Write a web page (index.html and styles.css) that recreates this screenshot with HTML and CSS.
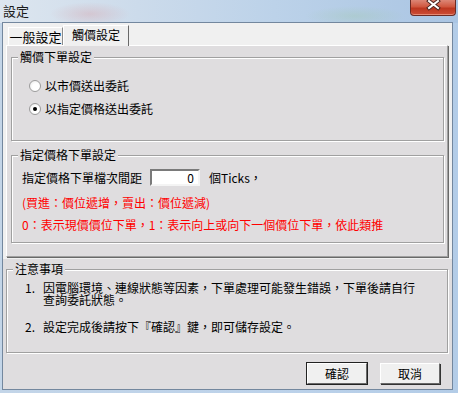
FILE: index.html
```html
<!DOCTYPE html>
<html lang="zh-Hant">
<head>
    <meta charset="UTF-8">
    <meta name="viewport" content="width=device-width, initial-scale=1.0">
    <title>設定</title>
    <link rel="stylesheet" href="styles.css">
</head>
<body>
    <div class="window">
        <div class="titlebar">
            <span class="title">設定</span>
            <div class="close-btn">
                <svg width="44" height="15" viewBox="0 0 44 15">
                    <path d="M18 1 L27 8 M27 1 L18 8" stroke="#4a2420" stroke-width="4" stroke-linecap="square" fill="none"/>
                    <path d="M18 1 L27 8 M27 1 L18 8" stroke="#ffffff" stroke-width="2" stroke-linecap="square" fill="none"/>
                </svg>
            </div>
        </div>
        <div class="client">
            <div class="tab-control">
                <div class="tab-strip">
                    <div class="tab">一般設定</div>
                    <div class="tab active">觸價設定</div>
                </div>
                <div class="tab-page">
                    <fieldset class="group">
                        <legend>觸價下單設定</legend>
                        <div class="group-body radios">
                            <label class="radio-row"><span class="radio"></span>以市價送出委託</label>
                            <label class="radio-row"><span class="radio checked"></span>以指定價格送出委託</label>
                        </div>
                    </fieldset>
                    <fieldset class="group price-group">
                        <legend>指定價格下單設定</legend>
                        <div class="group-body price">
                            <div class="tick-row">
                                <span>指定價格下單檔次間距</span>
                                <input type="text" class="tick-input" value="0">
                                <span class="unit">個Ticks，</span>
                            </div>
                            <p class="hint">(買進：價位遞增，賣出：價位遞減)</p>
                            <p class="hint">0：表示現價價位下單，1：表示向上或向下一個價位下單，依此類推</p>
                        </div>
                    </fieldset>
                </div>
            </div>
            <fieldset class="group notes">
                <legend>注意事項</legend>
                <div class="group-body notes-body">
                    <div class="note-item">
                        <span class="num">1.</span>
                        <span class="note-text">因電腦環境、連線狀態等因素，下單處理可能發生錯誤，下單後請自行查詢委託狀態。</span>
                    </div>
                    <div class="note-item second">
                        <span class="num">2.</span>
                        <span class="note-text">設定完成後請按下『確認』鍵，即可儲存設定。</span>
                    </div>
                </div>
            </fieldset>
            <div class="buttons">
                <button class="btn default">確認</button>
                <button class="btn">取消</button>
            </div>
        </div>
    </div>
</body>
</html>
```

FILE: styles.css
```css
body {
    margin: 0;
    font-family: "Noto Sans CJK TC", "Noto Sans", sans-serif;
    font-size: 12px;
    color: #000;
    background: #b9d1ea;
}
.window {
    width: 458px;
    height: 393px;
    display: flex;
    flex-direction: column;
    overflow: hidden;
    background: linear-gradient(to right, #c3d5e8 0%, #bcd2ea 60%, #b3cce7 100%);
}
.titlebar {
    height: 23px;
    flex-shrink: 0;
    display: flex;
    justify-content: space-between;
    align-items: flex-start;
    background:
        radial-gradient(ellipse 40px 12px at 90px 14px, rgba(214, 170, 178, 0.45), transparent),
        radial-gradient(ellipse 50px 10px at 355px 16px, rgba(160, 200, 170, 0.35), transparent),
        linear-gradient(to right, #dde6ef 0%, #ccdbeb 30%, #bcd2e9 60%, #aac5e3 100%);
}
.title {
    margin: 4px 0 0 3px;
    line-height: 14px;
    font-size: 13px;
    color: #1b1b1b;
}
.close-btn {
    width: 44px;
    height: 15px;
    margin-right: 2px;
    border: 1px solid #6b2b24;
    border-top: none;
    border-radius: 0 0 4px 4px;
    background: linear-gradient(#dc8676 0%, #d0573f 45%, #bd3720 55%, #cc4d36 100%);
    box-shadow: inset 0 -1px 0 rgba(255, 200, 180, 0.5);
}
.close-btn svg {
    display: block;
}
.client {
    margin: 0 6px 4px 3px;
    height: 366px;
    background: #dfdddf;
    box-shadow: 0 0 0 1px #73879e;
    overflow: hidden;
}
.tab-control {
    background: #f0f0f0;
    padding-bottom: 2px;
}
.tab-strip {
    height: 22px;
    display: flex;
    align-items: flex-end;
    padding-left: 5px;
}
.tab {
    box-sizing: border-box;
    width: 55px;
    height: 18px;
    display: flex;
    align-items: center;
    justify-content: center;
    line-height: 14px;
    font-size: 13px;
    background: #f0f0f0;
    border-top: 1px solid #fff;
    border-left: 1px solid #fff;
    border-right: 1px solid #8c8c8c;
}
.tab.active {
    width: 66px;
    height: 21px;
    margin-bottom: -1px;
    padding-bottom: 3px;
    font-size: 12px;
    z-index: 1;
    border-right: 1px solid #696969;
}
.tab-page {
    box-sizing: border-box;
    height: 212px;
    margin: 0 4px 0 3px;
    padding: 4px 3px 0 4px;
    background: #dfdddf;
    border: 1px solid;
    border-color: #fff #a0a0a0 #a0a0a0 #fff;
    box-shadow: 1px 1px 0 #696969;
}
.group {
    margin: 0;
    padding: 0;
    min-inline-size: 0;
    border: 1px solid #a0a0a0;
    box-shadow: 1px 1px 0 #fff, inset 1px 1px 0 #fff;
}
.group legend {
    margin-left: 6px;
    padding: 0 2px;
    line-height: 14px;
    background: #dfdddf;
}
.radios {
    padding: 10px 0 20px 17px;
}
.radio-row {
    height: 23px;
    display: flex;
    align-items: center;
}
.radio {
    box-sizing: border-box;
    width: 12px;
    height: 12px;
    margin-right: 4px;
    border-radius: 50%;
    border: 1px solid #9c9c9c;
    background: radial-gradient(circle at 60% 60%, #ffffff 40%, #e4e4e4 100%);
    display: inline-flex;
    align-items: center;
    justify-content: center;
}
.radio.checked::after {
    content: "";
    width: 4px;
    height: 4px;
    border-radius: 50%;
    background: #000;
}
.price-group {
    margin-top: 7px;
}
.price {
    padding: 7px 0 10px 10px;
}
.tick-row {
    height: 17px;
    display: flex;
    align-items: center;
    line-height: 14px;
}
.tick-input {
    box-sizing: border-box;
    width: 50px;
    height: 17px;
    margin: 0 9px 0 8px;
    padding: 0 4px;
    text-align: right;
    font-family: inherit;
    font-size: 12px;
    background: #fff;
    border: 2px solid;
    border-color: #7a7a7a #f4f4f4 #f4f4f4 #7a7a7a;
    outline: none;
}
.hint {
    margin: 10px 0 0;
    line-height: 14px;
    color: #ff0000;
}
.hint + .hint {
    margin-top: 8px;
}
.notes {
    margin: 3px 4px 0 3px;
}
.notes-body {
    padding: 6px 0 19px 18px;
}
.note-item {
    display: flex;
    line-height: 12px;
}
.note-item.second {
    margin-top: 15px;
}
.num {
    width: 18px;
    flex-shrink: 0;
}
.note-text {
    width: 378px;
}
.buttons {
    display: flex;
    justify-content: flex-end;
    gap: 13px;
    margin-top: 10px;
    padding-right: 12px;
}
.btn {
    box-sizing: border-box;
    width: 60px;
    height: 21px;
    padding: 0;
    font-family: inherit;
    font-size: 12px;
    color: #000;
    background: #f0f0f0;
    border: 1px solid;
    border-color: #fff #696969 #696969 #fff;
    box-shadow: 1px 1px 0 #333;
}
.btn.default {
    outline: 1px solid #222;
}
```
